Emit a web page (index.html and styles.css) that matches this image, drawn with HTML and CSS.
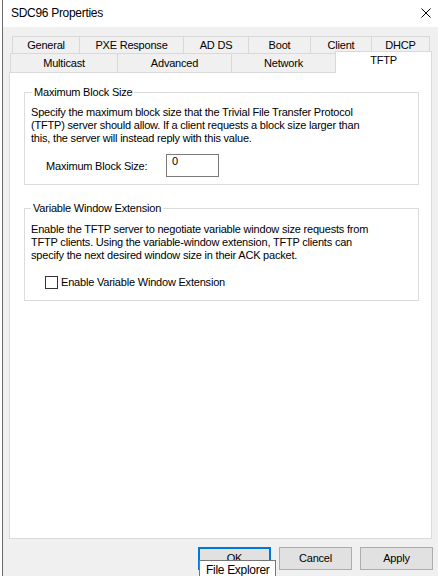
FILE: index.html
```html
<!DOCTYPE html>
<html lang="en">
<head>
<meta charset="utf-8">
<title>SDC96 Properties</title>
<link rel="stylesheet" href="styles.css">
</head>
<body>
<div class="screen">
  <div class="window">
    <div class="titlebar">
      <span class="title">SDC96 Properties</span>
      <svg class="close" width="10" height="10" viewBox="0 0 10 10" aria-hidden="true">
        <path d="M0.5 0.5 L9.5 9.5 M9.5 0.5 L0.5 9.5" stroke="#000" stroke-width="1" fill="none"/>
      </svg>
    </div>
    <div class="client">
      <div class="tabs">
        <div class="tabrow row1">
          <div class="tab">General</div>
          <div class="tab">PXE Response</div>
          <div class="tab">AD DS</div>
          <div class="tab">Boot</div>
          <div class="tab">Client</div>
          <div class="tab last">DHCP</div>
        </div>
        <div class="tabrow row2">
          <div class="tab">Multicast</div>
          <div class="tab">Advanced</div>
          <div class="tab">Network</div>
          <div class="tab selected">TFTP</div>
        </div>
      </div>
      <div class="panel">
        <fieldset class="group g1">
          <legend>Maximum Block Size</legend>
          <p>Specify the maximum block size that the Trivial File Transfer Protocol<br>(TFTP) server should allow. If a client requests a block size larger than<br>this, the server will instead reply with this value.</p>
          <div class="field">
            <span class="field-label">Maximum Block Size:</span>
            <span class="input">0</span>
          </div>
        </fieldset>
        <fieldset class="group g2">
          <legend>Variable Window Extension</legend>
          <p>Enable the TFTP server to negotiate variable window size requests from<br>TFTP clients. Using the variable-window extension, TFTP clients can<br>specify the next desired window size in their ACK packet.</p>
          <div class="check">
            <span class="box"></span>
            <span class="check-label">Enable Variable Window Extension</span>
          </div>
        </fieldset>
      </div>
      <div class="buttons">
        <span class="btn default">OK</span>
        <span class="btn">Cancel</span>
        <span class="btn">Apply</span>
      </div>
    </div>
  </div>
  <div class="tooltip">File Explorer</div>
</div>
</body>
</html>
```
FILE: styles.css
```css
html, body {
  margin: 0;
  padding: 0;
  background: #ffffff;
}
body {
  font-family: "Liberation Sans", Arial, sans-serif;
  font-size: 11px;
  letter-spacing: -0.2px;
  color: #000;
  overflow: hidden;
}
.screen {
  position: relative;
  width: 438px;
  height: 576px;
  display: flex;
}
.window {
  margin-left: 2px;
  border-left: 1px solid #6a6a6a;
  flex: 1;
  display: flex;
  flex-direction: column;
  min-width: 0;
}
.titlebar {
  height: 27px;
  background: #ffffff;
  display: flex;
  align-items: center;
  justify-content: space-between;
  padding: 0 7px 2px 8px;
  box-sizing: border-box;
}
.title {
  font-size: 12px;
  letter-spacing: -0.3px;
  line-height: 16px;
}
.close {
  display: block;
  margin-top: 1px;
}
.client {
  flex: 1;
  background: #f0f0f0;
  padding: 9px 5px 0 6px;
  display: flex;
  flex-direction: column;
}
.tabs {
  display: flex;
  flex-direction: column;
}
.tabrow {
  display: flex;
}
.tab {
  box-sizing: border-box;
  border-top: 1px solid #d9d9d9;
  border-left: 1px solid #d9d9d9;
  background: #f0f0f0;
  text-align: center;
  white-space: nowrap;
}
.row1 {
  margin-left: 3px;
}
.row1 .tab {
  height: 17px;
  line-height: 16px;
}
.row1 .tab:nth-child(1) { width: 67px; }
.row1 .tab:nth-child(2) { width: 104px; }
.row1 .tab:nth-child(3) { width: 65px; }
.row1 .tab:nth-child(4) { width: 62px; }
.row1 .tab:nth-child(5) { width: 61px; }
.row1 .tab:nth-child(6) { width: 59px; }
.tab.last {
  border-right: 1px solid #d9d9d9;
}
.row2 {
  margin-left: 1px;
  align-items: flex-end;
}
.row2 .tab {
  height: 19px;
  line-height: 18px;
}
.row2 .tab:nth-child(1) { width: 107px; }
.row2 .tab:nth-child(2) { width: 114px; }
.row2 .tab:nth-child(3) { width: 104px; }
.row2 .tab.selected {
  width: 97px;
  height: 22px;
  margin-top: -2px;
  margin-bottom: -1px;
  line-height: 16px;
  background: #ffffff;
  border-right: 1px solid #d9d9d9;
  position: relative;
  z-index: 2;
}
.panel {
  box-sizing: border-box;
  height: 467px;
  margin-right: 1px;
  background: #ffffff;
  border: 1px solid #d9d9d9;
  padding: 13px 12px 0 14px;
  position: relative;
  z-index: 1;
}
.group {
  margin: 0;
  min-width: 0;
  border: 1px solid #dcdcdc;
  padding: 7px 6px 7px 6px;
}
.group legend {
  padding: 0 2px;
  margin-left: 1px;
  line-height: 13px;
}
.group p {
  margin: 0;
  line-height: 13px;
  white-space: nowrap;
}
.g2 {
  margin-top: 17px;
  padding-top: 8px;
  padding-bottom: 11px;
}
.g2 legend {
  margin-left: 0;
}
.field {
  display: flex;
  align-items: center;
  margin-top: 9px;
  margin-left: 15px;
}
.field-label {
  width: 120px;
}
.input {
  box-sizing: border-box;
  width: 53px;
  height: 23px;
  border: 1px solid #7a7a7a;
  padding: 1px 0 0 5px;
  line-height: 11px;
}
.check {
  display: flex;
  align-items: center;
  margin-top: 14px;
  margin-left: 14px;
}
.box {
  box-sizing: border-box;
  width: 13px;
  height: 13px;
  border: 1px solid #333333;
  background: #ffffff;
  margin-right: 3px;
}
.check-label {
  line-height: 13px;
}
.buttons {
  display: flex;
  justify-content: flex-end;
  gap: 8px;
  margin-top: 8px;
}
.btn {
  box-sizing: border-box;
  width: 73px;
  height: 23px;
  background: #e1e1e1;
  border: 1px solid #adadad;
  text-align: center;
  line-height: 21px;
}
.btn.default {
  border: 2px solid #0078d7;
  line-height: 19px;
}
.tooltip {
  position: absolute;
  left: 199px;
  top: 560px;
  width: 77px;
  height: 24px;
  box-sizing: border-box;
  border: 1px solid #767676;
  background: #ffffff;
  font-size: 12px;
  letter-spacing: -0.3px;
  line-height: 16px;
  padding: 1px 0 0 6px;
  white-space: nowrap;
  z-index: 5;
}
```
